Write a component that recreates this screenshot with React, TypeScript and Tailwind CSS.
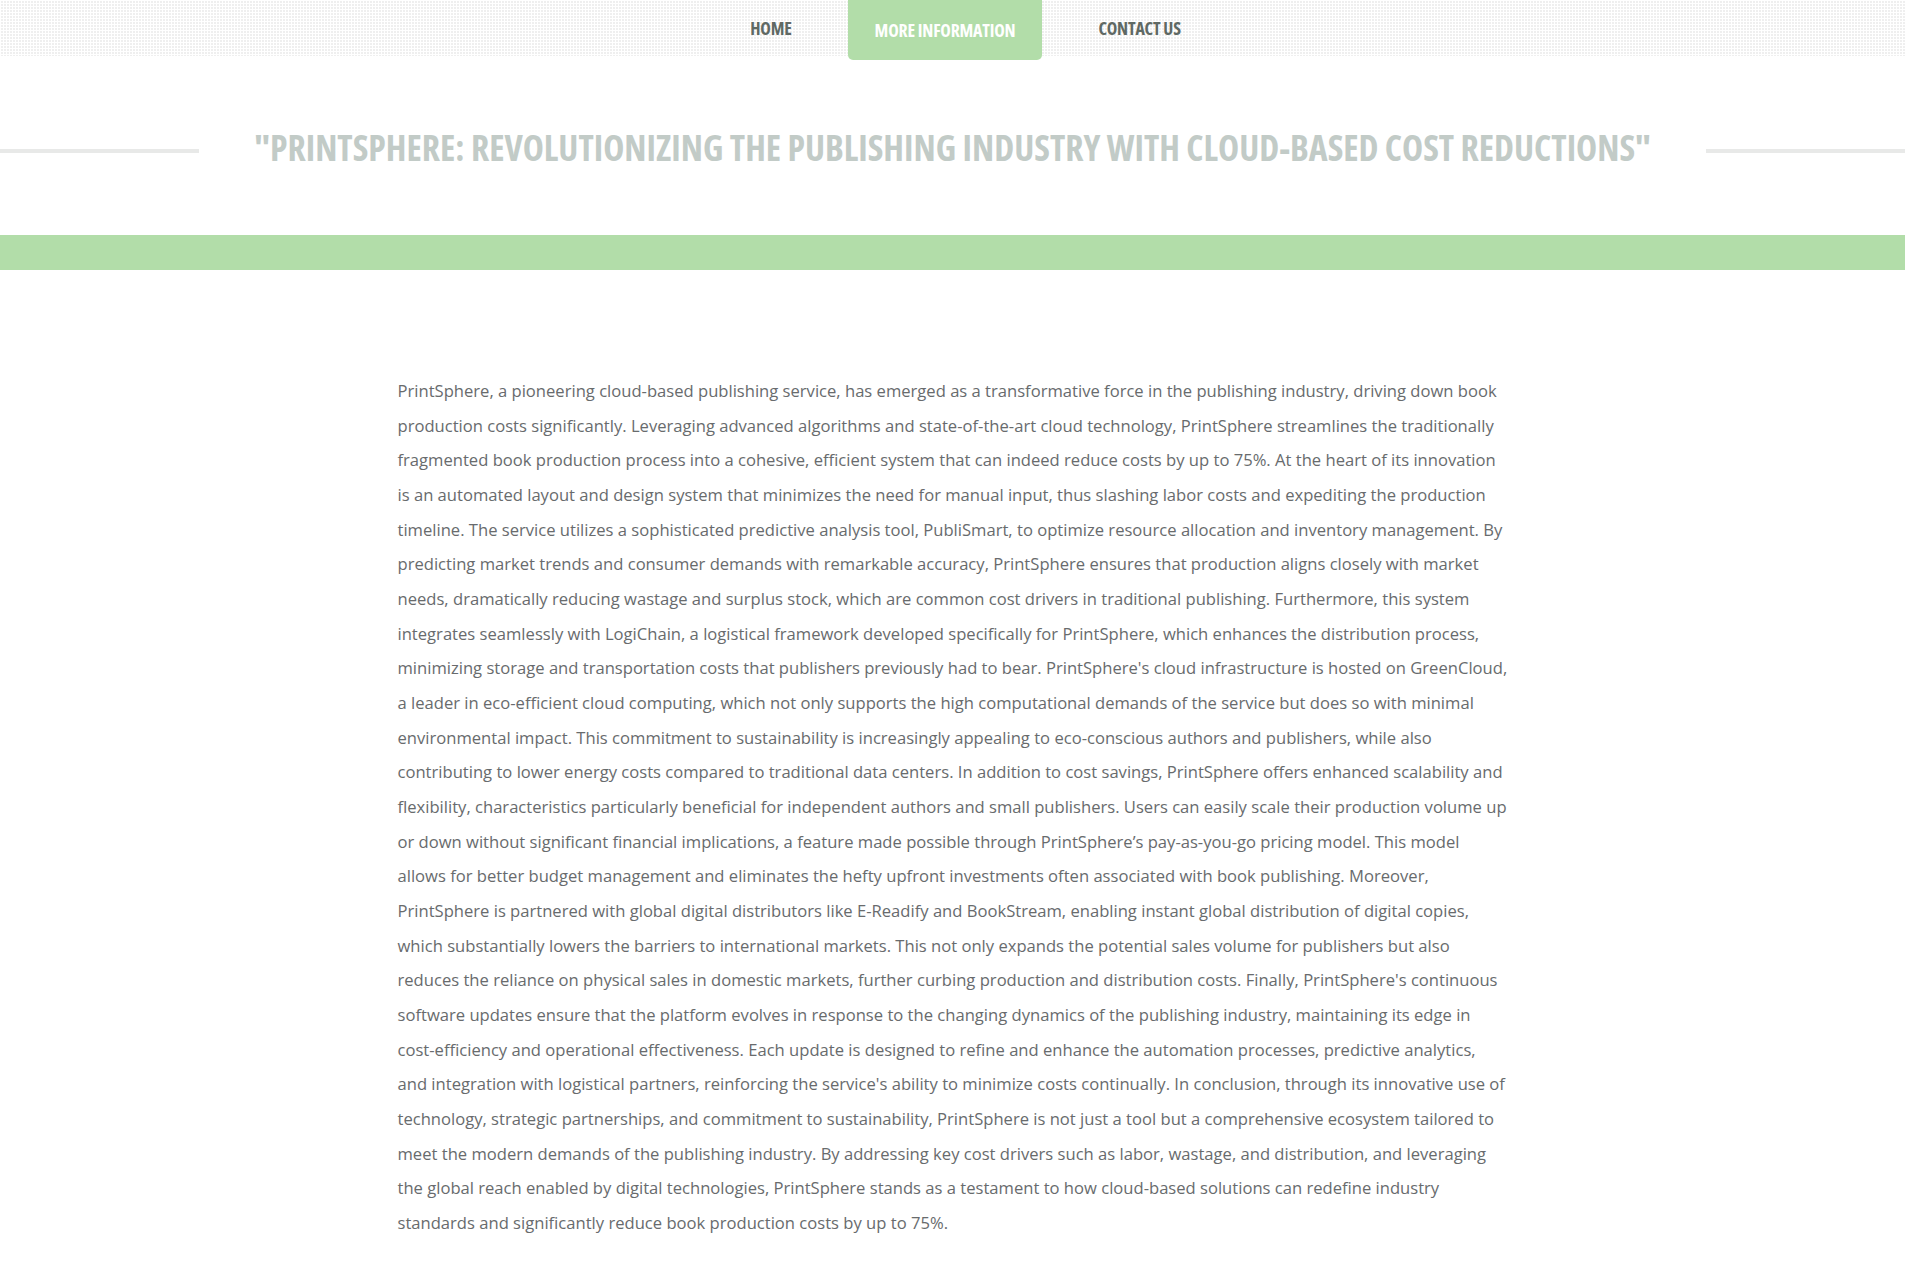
import React from 'react';

const navItems = [
    { label: 'HOME', active: false },
    { label: 'MORE INFORMATION', active: true },
    { label: 'CONTACT US', active: false },
];

const bodyText = `PrintSphere, a pioneering cloud-based publishing service, has emerged as a transformative force in the publishing industry, driving down book production costs significantly. Leveraging advanced algorithms and state-of-the-art cloud technology, PrintSphere streamlines the traditionally fragmented book production process into a cohesive, efficient system that can indeed reduce costs by up to 75%. At the heart of its innovation is an automated layout and design system that minimizes the need for manual input, thus slashing labor costs and expediting the production timeline. The service utilizes a sophisticated predictive analysis tool, PubliSmart, to optimize resource allocation and inventory management. By predicting market trends and consumer demands with remarkable accuracy, PrintSphere ensures that production aligns closely with market needs, dramatically reducing wastage and surplus stock, which are common cost drivers in traditional publishing. Furthermore, this system integrates seamlessly with LogiChain, a logistical framework developed specifically for PrintSphere, which enhances the distribution process, minimizing storage and transportation costs that publishers previously had to bear. PrintSphere's cloud infrastructure is hosted on GreenCloud, a leader in eco-efficient cloud computing, which not only supports the high computational demands of the service but does so with minimal environmental impact. This commitment to sustainability is increasingly appealing to eco-conscious authors and publishers, while also contributing to lower energy costs compared to traditional data centers. In addition to cost savings, PrintSphere offers enhanced scalability and flexibility, characteristics particularly beneficial for independent authors and small publishers. Users can easily scale their production volume up or down without significant financial implications, a feature made possible through PrintSphere\u2019s pay-as-you-go pricing model. This model allows for better budget management and eliminates the hefty upfront investments often associated with book publishing. Moreover, PrintSphere is partnered with global digital distributors like E-Readify and BookStream, enabling instant global distribution of digital copies, which substantially lowers the barriers to international markets. This not only expands the potential sales volume for publishers but also reduces the reliance on physical sales in domestic markets, further curbing production and distribution costs. Finally, PrintSphere's continuous software updates ensure that the platform evolves in response to the changing dynamics of the publishing industry, maintaining its edge in cost-efficiency and operational effectiveness. Each update is designed to refine and enhance the automation processes, predictive analytics, and integration with logistical partners, reinforcing the service's ability to minimize costs continually. In conclusion, through its innovative use of technology, strategic partnerships, and commitment to sustainability, PrintSphere is not just a tool but a comprehensive ecosystem tailored to meet the modern demands of the publishing industry. By addressing key cost drivers such as labor, wastage, and distribution, and leveraging the global reach enabled by digital technologies, PrintSphere stands as a testament to how cloud-based solutions can redefine industry standards and significantly reduce book production costs by up to 75%.`;

export default function App() {
    return (
        <div className="w-[1905px] min-h-screen bg-white font-['Open_Sans',sans-serif]">
            {/* Top navigation */}
            <header className="h-[56px] bg-[linear-gradient(90deg,#fff_1px,transparent_1px),linear-gradient(#fff_1px,#efefef_1px)] bg-[size:3px_3px]">
                <nav className="flex justify-center pl-[26px] gap-[30px]">
                    {navItems.map((item) => (
                        <a
                            key={item.label}
                            href="#"
                            className={
                                item.active
                                    ? 'h-[60px] px-[26.5px] flex items-center rounded-b-[5px] bg-[#b2dda9] text-white text-[17.8px] font-bold font-stretch-condensed tracking-[-0.2px]'
                                    : 'h-[56px] px-[26.5px] flex items-center text-[#5f6964] text-[17.8px] font-bold font-stretch-condensed tracking-[-0.2px]'
                            }
                        >
                            {item.label}
                        </a>
                    ))}
                </nav>
            </header>

            {/* Title */}
            <div className="flex items-center gap-[55px] mt-[69px]">
                <div className="flex-1 h-[4px] mt-[8px] bg-[#e8e9e8]"></div>
                <h1 className="text-[35.7px] leading-[44px] font-bold font-stretch-condensed text-[#c2cbc7] whitespace-nowrap">
                    "PRINTSPHERE: REVOLUTIONIZING THE PUBLISHING INDUSTRY WITH CLOUD-BASED COST REDUCTIONS"
                </h1>
                <div className="flex-1 h-[4px] mt-[8px] bg-[#e8e9e8]"></div>
            </div>

            <div className="h-[35px] bg-[#b2dda9] mt-[66px]"></div>

            {/* Body */}
            <main className="max-w-[1140px] mx-auto px-[15px] pt-[104px] pb-[115px]">
                <p className="text-[16.6px] leading-[34.67px] text-[#686b6d]">{bodyText}</p>
            </main>
        </div>
    );
}
